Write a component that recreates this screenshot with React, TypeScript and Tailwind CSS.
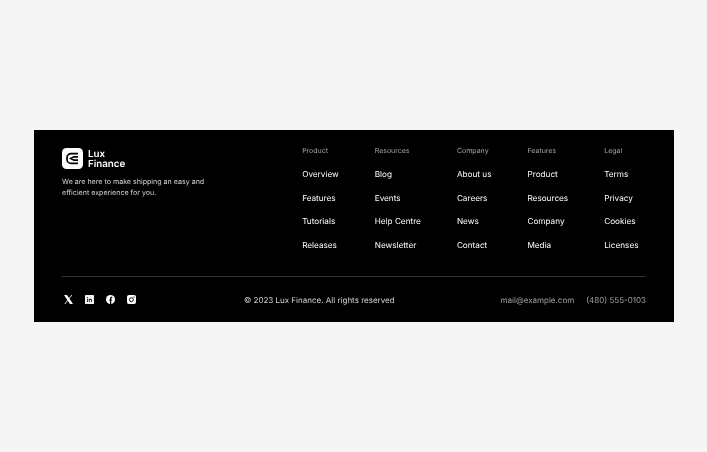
const columns = [
  { title: 'Product', links: ['Overview', 'Features', 'Tutorials', 'Releases'] },
  { title: 'Resources', links: ['Blog', 'Events', 'Help Centre', 'Newsletter'] },
  { title: 'Company', links: ['About us', 'Careers', 'News', 'Contact'] },
  { title: 'Features', links: ['Product', 'Resources', 'Company', 'Media'] },
  { title: 'Legal', links: ['Terms', 'Privacy', 'Cookies', 'Licenses'] },
]

function Logo() {
  return (
    <svg width="21" height="21" viewBox="0 0 21 21" className="shrink-0">
      <rect width="21" height="21" rx="4.5" fill="#fff" />
      <path d="M16 5.6H9a4 4 0 0 0-4 4v1.8a4 4 0 0 0 4 4h7" fill="none" stroke="#000" strokeWidth="1.7" />
      <path d="M16 8.8H12L8.8 10.5 12 12.2H16" fill="none" stroke="#000" strokeWidth="1.7" />
    </svg>
  )
}

function Socials() {
  return (
    <div className="ml-[2px] flex items-center gap-[12px]">
      <svg width="9" height="9" viewBox="0 0 9 9" fill="#fff">
        <path d="M0 0h3l6 9H6z" />
        <path d="M7.4 0h.9L1.2 9H.3z" />
      </svg>
      <svg width="9" height="9" viewBox="0 0 9 9">
        <rect width="9" height="9" rx="0.6" fill="#f2f2f2" />
        <path d="M2 3.7h.9v3.4H2zM2 2.1h.9v.9H2zM3.8 3.7h.9v.4c.5-.6 2.2-.8 2.2.9v2.1H6V5.3c0-.9-1.3-.8-1.3 0v1.8h-.9z" fill="#222" />
      </svg>
      <svg width="9" height="9" viewBox="0 0 9 9">
        <circle cx="4.5" cy="4.5" r="4.5" fill="#fff" />
        <path d="M4 9V5.6H3.1V4.4H4V3.4C4 2.3 4.7 1.8 5.5 1.8c.4 0 .6 0 .8.1v1h-.5c-.5 0-.6.2-.6.6v.9h1l-.2 1.2h-.8V9z" fill="#000" />
      </svg>
      <svg width="9" height="9" viewBox="0 0 9 9">
        <rect width="9" height="9" rx="2" fill="#fff" />
        <circle cx="4.4" cy="4.7" r="2" fill="none" stroke="#000" strokeWidth="0.9" />
        <circle cx="6.9" cy="2.1" r="0.6" fill="#000" />
      </svg>
    </div>
  )
}

export default function App() {
  return (
    <div className="min-h-[452px] bg-[#f5f5f5] pl-[34px] pr-[33px] pt-[130px] font-['Inter',sans-serif] antialiased [text-rendering:geometricPrecision]">
      <footer className="h-[192px] bg-black">
        <div className="h-full px-[28px] pt-[16px] will-change-transform">
          <div className="flex h-[131px] items-start justify-between border-b border-[#333333]">
            <div className="w-[150px] pt-[2px]">
              <div className="flex items-start gap-[5px]">
                <Logo />
                <p className="mt-[1.5px] text-[9.75px] font-semibold leading-[10.5px] text-white">Lux<br />Finance</p>
              </div>
              <p className="mt-[6.5px] text-[7.1px] leading-[10.5px] text-[#d4d4d4]">
                We are here to make shipping an easy and efficient experience for you.
              </p>
            </div>
            <nav className="flex gap-[36px] pr-[7.5px]">
              {columns.map((col) => (
                <div key={col.title}>
                  <p className="text-[7px] leading-[10px] text-[#a3a3a3]">{col.title}</p>
                  <ul className="mt-[12px] flex flex-col gap-[10px]">
                    {col.links.map((link) => (
                      <li key={link} className="text-[8.2px] leading-[13.7px] text-white whitespace-nowrap">{link}</li>
                    ))}
                  </ul>
                </div>
              ))}
            </nav>
          </div>
          <div className="flex h-[45px] items-center justify-between">
            <Socials />
            <p className="ml-[2px] text-[8px] text-[#d4d4d4]">© 2023 Lux Finance. All rights reserved</p>
            <div className="flex gap-[12px] text-[8px] text-[#a3a3a3]">
              <span>mail@example.com</span>
              <span>(480) 555-0103</span>
            </div>
          </div>
        </div>
      </footer>
    </div>
  )
}
